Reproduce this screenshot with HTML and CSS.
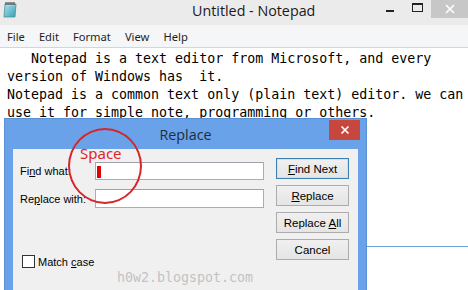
FILE: index.html
```html
<!DOCTYPE html>
<html>
<head>
<meta charset="utf-8">
<link rel="stylesheet" href="styles.css">
</head>
<body>
<div class="window">
  <div class="titlebar">
    <svg class="app-icon" width="16" height="17" viewBox="0 0 16 17">
      <defs>
        <linearGradient id="pad" x1="0" y1="0" x2="1" y2="1">
          <stop offset="0" stop-color="#a9e4ea"/>
          <stop offset="1" stop-color="#3c9cb5"/>
        </linearGradient>
      </defs>
      <path d="M3 3 L14 3 L13 16 L2 16 Z" fill="url(#pad)" stroke="#4a8fa0" stroke-width="0.8"/>
      <path d="M4 4 L12.5 4" stroke="#ffffff" stroke-width="0.8" opacity="0.6"/>
      <g stroke="#333" stroke-width="1">
        <line x1="4" y1="1" x2="4" y2="4"/>
        <line x1="6" y1="1" x2="6" y2="4"/>
        <line x1="8" y1="1" x2="8" y2="4"/>
        <line x1="10" y1="1" x2="10" y2="4"/>
        <line x1="12" y1="1" x2="12" y2="4"/>
      </g>
    </svg>
    <span class="win-title">Untitled - Notepad</span>
    <div class="controls">
      <div class="ctl ctl-min"><span class="dash"></span></div>
      <div class="ctl ctl-max"><span class="box"></span></div>
      <div class="ctl ctl-close">
        <svg width="12" height="10" viewBox="0 0 12 10"><path d="M2 1 L10 9 M10 1 L2 9" stroke="#fff" stroke-width="1.6"/></svg>
      </div>
    </div>
  </div>
  <div class="menubar">
    <span>File</span><span>Edit</span><span>Format</span><span>View</span><span>Help</span>
  </div>
  <div class="editor">
<pre class="text">   Notepad is a text editor from Microsoft, and every
version of Windows has  it.
Notepad is a common text only (plain text) editor. we can
use it for simple note, programming or others.</pre>
    <div class="rule"></div>
  </div>
</div>

<div class="dialog">
  <div class="dlg-title">
    <span class="dlg-spacer"></span>
    <span class="dlg-caption">Replace</span>
    <div class="dlg-close-wrap">
      <div class="dlg-close">
        <svg width="10" height="10" viewBox="0 0 10 10"><path d="M1.5 1.5 L8.5 8.5 M8.5 1.5 L1.5 8.5" stroke="#fff" stroke-width="1.7"/></svg>
      </div>
    </div>
  </div>
  <div class="dlg-body">
    <div class="fields">
      <div class="row row-find">
        <label class="lbl">Fi<u>n</u>d what:</label>
        <div class="input"><span class="caret"></span></div>
      </div>
      <div class="row row-replace">
        <label class="lbl">Re<u>p</u>lace with:</label>
        <div class="input"></div>
      </div>
      <div class="check-row">
        <span class="checkbox"></span>
        <span class="check-label">Match <u>c</u>ase</span>
      </div>
    </div>
    <div class="buttons">
      <div class="btn btn-default"><span><u>F</u>ind Next</span></div>
      <div class="btn"><span><u>R</u>eplace</span></div>
      <div class="btn"><span>Replace <u>A</u>ll</span></div>
      <div class="btn"><span>Cancel</span></div>
    </div>
  </div>
</div>

<div class="annot-circle"></div>
<div class="annot-text">Space</div>
<div class="watermark">h0w2.blogspot.com</div>
</body>
</html>
```

FILE: styles.css
```css
html, body {
  margin: 0;
  padding: 0;
}
body {
  width: 468px;
  height: 290px;
  overflow: hidden;
  position: relative;
  background: #ffffff;
}
.window {
  display: flex;
  flex-direction: column;
  height: 290px;
}
.titlebar {
  height: 25px;
  background: #ebebeb;
  display: flex;
  align-items: flex-start;
  flex: none;
}
.app-icon {
  margin: 1px 0 0 2px;
  flex: none;
}
.win-title {
  font-family: "Open Sans", "Noto Sans", sans-serif;
  font-size: 14.3px;
  color: #1a1a1a;
  margin-left: 174px;
  line-height: 20px;
  margin-top: 1px;
  white-space: nowrap;
}
.controls {
  margin-left: auto;
  display: flex;
  gap: 1px;
}
.ctl {
  height: 18px;
  display: flex;
  align-items: center;
  justify-content: center;
}
.ctl-min, .ctl-max {
  width: 26px;
}
.dash {
  width: 8px;
  height: 2px;
  background: #222;
  margin-top: 3px;
}
.box {
  width: 9px;
  height: 6px;
  border: 1px solid #222;
  border-top-width: 2px;
  margin-top: -3px;
}
.ctl-close {
  width: 37px;
  background: #c7c7c7;
}
.menubar {
  height: 22px;
  background: #f5f6f7;
  display: flex;
  align-items: center;
  gap: 14px;
  padding-left: 7px;
  font-family: "Noto Sans", "Open Sans", sans-serif;
  font-size: 11.2px;
  color: #1e1e1e;
  flex: none;
}
.editor {
  flex: 1;
  background: #ffffff;
  border-top: 1px solid #c8d7ea;
}
.text {
  margin: 0;
  padding: 2px 7px 0;
  font-family: "DejaVu Sans Mono", monospace;
  font-size: 13.3px;
  line-height: 18px;
  color: #000;
}
.rule {
  margin-top: 124px;
  margin-left: 360px;
  height: 1px;
  background: #6e9fde;
}

/* Replace dialog */
.dialog {
  position: absolute;
  left: 5px;
  top: 119px;
  width: 361px;
  height: 180px;
  background: #6aa2ea;
  display: flex;
  flex-direction: column;
  box-shadow: 0 0 0 1px #5b90d4;
}
.dlg-title {
  height: 30px;
  display: grid;
  grid-template-columns: 1fr auto 1fr;
  align-items: center;
  flex: none;
}
.dlg-caption {
  font-family: "Open Sans", "Noto Sans", sans-serif;
  font-size: 14.3px;
  color: #1f2d3d;
  margin-top: 1px;
}
.dlg-close-wrap {
  align-self: start;
  justify-self: end;
  margin-right: 6px;
  margin-top: 1px;
}
.dlg-close {
  width: 31px;
  height: 20px;
  background: #c7463e;
  display: flex;
  align-items: center;
  justify-content: center;
}
.dlg-body {
  flex: 1;
  margin: 0 8px;
  background: #f0f0f0;
  display: flex;
  padding: 9px 0 0 7px;
  font-family: "Liberation Sans", Arial, sans-serif;
  font-size: 11px;
  color: #000;
}
.fields {
  width: 246px;
  display: flex;
  flex-direction: column;
}
.row {
  display: flex;
  align-items: center;
}
.row-find {
  margin-top: 4px;
  height: 18px;
}
.row-replace {
  margin-top: 9px;
  height: 19px;
}
.lbl {
  width: 75px;
  flex: none;
}
.input {
  width: 169px;
  height: 100%;
  box-sizing: border-box;
  border: 1px solid #abadb3;
  border-top-color: #9fa2aa;
  background: #fff;
  position: relative;
}
.caret {
  position: absolute;
  left: 1px;
  top: 3px;
  width: 4px;
  height: 12px;
  background: #e40000;
}
.check-row {
  margin-top: 47px;
  margin-left: 2px;
  display: flex;
  align-items: center;
  gap: 3px;
}
.checkbox {
  width: 13px;
  height: 13px;
  box-sizing: border-box;
  border: 1px solid #333;
  background: #fff;
}
.buttons {
  margin-left: 10px;
  display: flex;
  flex-direction: column;
  gap: 6px;
}
.btn {
  width: 73px;
  height: 21px;
  box-sizing: border-box;
  border: 1px solid #acacac;
  background: linear-gradient(#f0f0f0, #e5e5e5);
  display: flex;
  align-items: center;
  justify-content: center;
  font-size: 11.5px;
  white-space: pre;
}
.btn-default {
  border: 1px solid #3c7fb1;
  box-shadow: inset 0 0 0 1px #cde3f5;
}

/* annotations */
.annot-circle {
  position: absolute;
  left: 68px;
  top: 128px;
  width: 70px;
  height: 72px;
  border: 2px solid #d6262a;
  border-radius: 50%;
}
.annot-text {
  position: absolute;
  left: 80px;
  top: 143px;
  font-family: "Noto Sans", "Open Sans", sans-serif;
  font-size: 15px;
  line-height: 20px;
  color: #e0262b;
}
.watermark {
  position: absolute;
  left: 117px;
  top: 269px;
  font-family: "DejaVu Sans Mono", monospace;
  font-size: 13.3px;
  line-height: 18px;
  color: #c3c3c3;
}
```
